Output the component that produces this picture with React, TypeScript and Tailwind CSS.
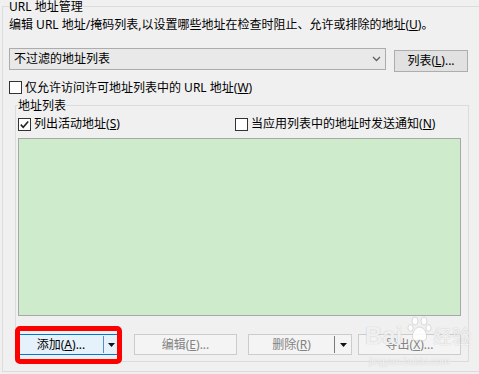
import React from "react";

const FONT = '"Noto Sans", "Noto Sans CJK SC", sans-serif';

function CheckBox({ checked }: { checked?: boolean }) {
  return (
    <span className="inline-flex w-[13px] h-[13px] shrink-0 border border-[#333333] bg-white items-center justify-center">
      {checked && (
        <svg width="11" height="11" viewBox="0 0 11 11">
          <path d="M1.8 5.6 L4.2 8.2 L9.2 2.4" fill="none" stroke="#222" strokeWidth="1.6" />
        </svg>
      )}
    </span>
  );
}

function Acc({ k }: { k: string }) {
  return (
    <span>
      (<span className="underline underline-offset-[1px]">{k}</span>)
    </span>
  );
}

function Tri() {
  return (
    <svg width="7" height="4" viewBox="0 0 7 4">
      <path d="M0 0 H7 L3.5 4 Z" fill="#111" />
    </svg>
  );
}

export default function App() {
  return (
    <div
      className="w-[479px] h-[374px] overflow-hidden bg-[#f0f0f0] text-[12px] leading-[16px] text-black"
      style={{ fontFamily: FONT }}
    >
      <fieldset className="ml-[2px] w-[480px] h-[372px] border border-[#dcdcdc] pl-[6px] pr-0 pb-0 pt-0 min-w-0">
        <legend className="px-0 leading-[13px]">URL 地址管理</legend>
        <div className="mt-[4px] whitespace-nowrap">
          编辑 URL 地址/掩码列表,以设置哪些地址在检查时阻止、允许或排除的地址<Acc k="U" />。
        </div>

        <div className="mt-[15px] flex items-start">
          <div className="w-[377px] h-[22px] border border-[#acacac] bg-[#e9e9e9] flex items-center pl-[4px] pr-[3px]">
            <span className="flex-1">不过滤的地址列表</span>
            <svg width="9" height="6" viewBox="0 0 9 6" className="mr-[1px]">
              <path d="M1 1 L4.5 4.5 L8 1" fill="none" stroke="#606060" strokeWidth="1.3" />
            </svg>
          </div>
          <div className="ml-[8px] mt-[2px] w-[74px] h-[22px] border border-[#adadad] bg-[#e1e1e1] flex items-center justify-center">
            列表<Acc k="L" />...
          </div>
        </div>

        <div className="mt-[8px] h-[15px] flex items-center">
          <CheckBox />
          <span className="ml-[3px]">
            仅允许访问许可地址列表中的 URL 地址<Acc k="W" />
          </span>
        </div>

        <fieldset className="mt-[4px] ml-[6px] w-[454px] h-[263px] border border-[#dcdcdc] pl-[2px] pr-0 pt-0 pb-0 min-w-0">
          <legend className="px-0 leading-[13px]">地址列表</legend>
          <div className="mt-[4px] h-[16px] flex items-center">
            <div className="w-[217px] flex items-center">
              <CheckBox checked />
              <span className="ml-[3px]">
                列出活动地址<Acc k="S" />
              </span>
            </div>
            <div className="flex items-center">
              <CheckBox />
              <span className="ml-[3px]">
                当应用列表中的地址时发送通知<Acc k="N" />
              </span>
            </div>
          </div>

          <div className="mt-[6px] w-[443px] h-[178px] border border-[#a8a8a8] bg-[#ceeccb]" />

          <div className="mt-[18px] flex items-start relative">
            <div className="relative w-[102px] h-[21px] border border-[#0078d7] bg-[#e5f1fb] flex items-center">
              <span className="w-[84px] text-center">
                添加<Acc k="A" />...
              </span>
              <span className="w-px h-[17px] bg-[#5a8cc0]" />
              <span className="flex-1 flex justify-center">
                <Tri />
              </span>
              <div className="absolute left-[-4px] top-[-9px] w-[107px] h-[38px] border-[5px] border-[#ff0000] rounded-[5px]" />
            </div>
            <div className="ml-[14px] w-[103px] h-[21px] border border-[#cccccc] bg-[#f4f4f4] flex items-center justify-center text-[#838383]">
              编辑<Acc k="E" />...
            </div>
            <div className="ml-[11px] w-[104px] h-[21px] border border-[#cccccc] bg-[#f4f4f4] flex items-center text-[#838383]">
              <span className="w-[85px] text-center">
                删除<Acc k="R" />
              </span>
              <span className="w-px h-[17px] bg-[#7a7a7a]" />
              <span className="flex-1 flex justify-center">
                <Tri />
              </span>
            </div>
            <div className="ml-[6px] w-[103px] h-[21px] border border-[#cccccc] bg-[#f4f4f4] flex items-center justify-center text-[#838383] relative">
              导出<Acc k="X" />...
              <div className="absolute left-[6px] top-[-20px] w-[110px] h-[56px] pointer-events-none">
                <div className="absolute left-[0px] top-[8px] text-[24px] leading-[26px] font-bold text-white/80 [text-shadow:0_0_1px_#b0b0b0]" style={{ fontFamily: '"Liberation Sans", sans-serif' }}>
                  Bai
                </div>
                <svg className="absolute left-[42px] top-[0px]" width="26" height="30" viewBox="0 0 26 30">
                  <g fill="#ffffff" fillOpacity="0.85" stroke="#c4c4c4" strokeWidth="0.6">
                    <ellipse cx="8" cy="6" rx="3" ry="4" />
                    <ellipse cx="17" cy="6" rx="3" ry="4" />
                    <ellipse cx="3.5" cy="13" rx="2.6" ry="3.3" />
                    <ellipse cx="21.5" cy="13" rx="2.6" ry="3.3" />
                    <path d="M12.5 12 C7 12 4 21 6 24 C8 27 11 25 12.5 25 C14 25 17 27 19 24 C21 21 18 12 12.5 12 Z" />
                  </g>
                </svg>
                <div className="absolute left-[68px] top-[9px] text-[19px] leading-[24px] text-white/80 [text-shadow:0_0_1px_#b0b0b0]" style={{ fontFamily: '"Noto Sans CJK SC", sans-serif' }}>
                  经验
                </div>
                <div className="absolute left-[4px] top-[41px] text-[10px] leading-[12px] text-white/80 [text-shadow:0_0_1px_#b8b8b8] whitespace-nowrap" style={{ fontFamily: '"Liberation Sans", sans-serif' }}>
                  jingyan.baidu.com
                </div>
              </div>
            </div>
          </div>
        </fieldset>
      </fieldset>
    </div>
  );
}
